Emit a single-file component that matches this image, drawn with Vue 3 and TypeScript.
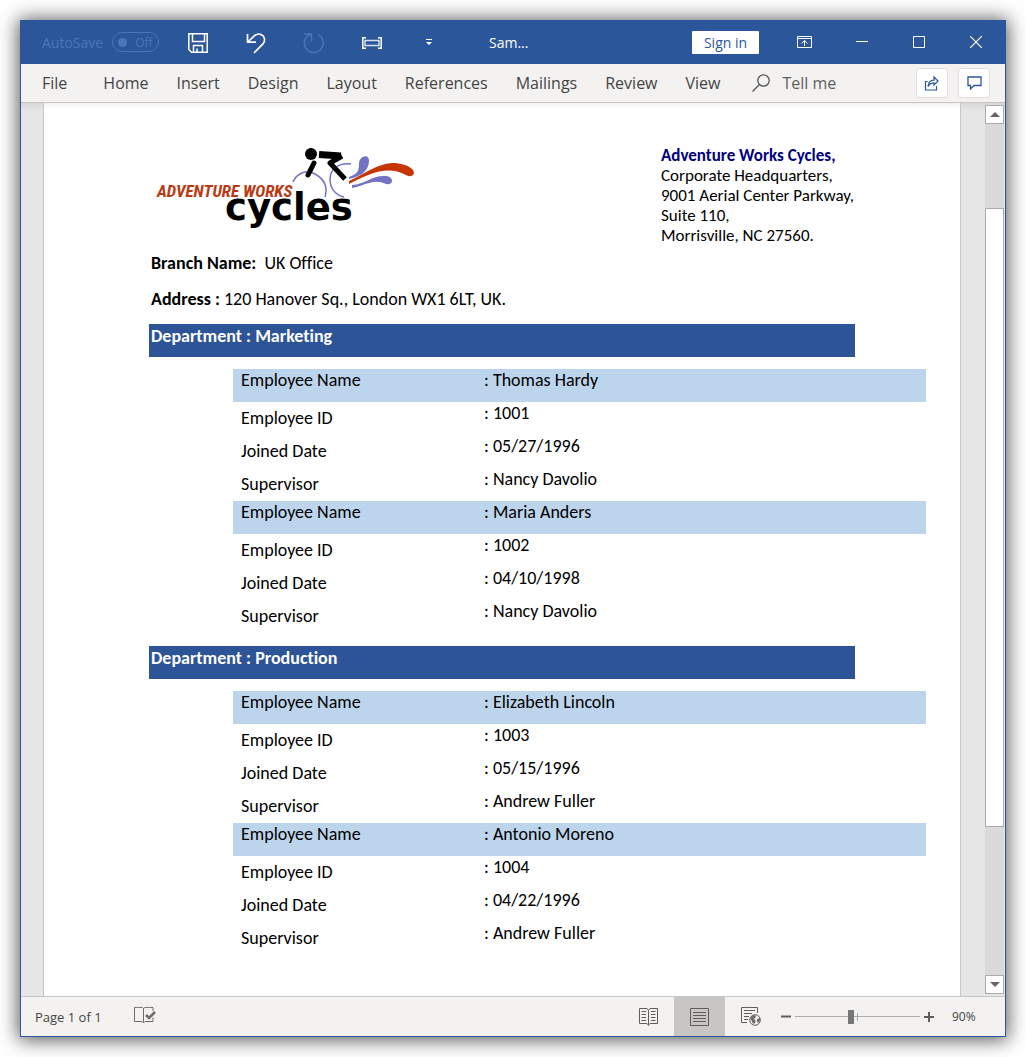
<script setup lang="ts">
import { ref } from 'vue'

interface Employee {
  name: string
  id: string
  joined: string
  supervisor: string
}

interface Department {
  name: string
  employees: Employee[]
}

const tabs: string[] = ['File', 'Home', 'Insert', 'Design', 'Layout', 'References', 'Mailings', 'Review', 'View']

const departments: Department[] = [
  {
    name: 'Marketing',
    employees: [
      { name: 'Thomas Hardy', id: '1001', joined: '05/27/1996', supervisor: 'Nancy Davolio' },
      { name: 'Maria Anders', id: '1002', joined: '04/10/1998', supervisor: 'Nancy Davolio' },
    ],
  },
  {
    name: 'Production',
    employees: [
      { name: 'Elizabeth Lincoln', id: '1003', joined: '05/15/1996', supervisor: 'Andrew Fuller' },
      { name: 'Antonio Moreno', id: '1004', joined: '04/22/1996', supervisor: 'Andrew Fuller' },
    ],
  },
]

const zoom = ref(90)
</script>

<template>
  <div class="window">
    <header class="titlebar">
      <span class="autosave">AutoSave</span>
      <button class="toggle" type="button" disabled aria-label="AutoSave off"><span class="dot"></span>Off</button>
      <nav class="quick" aria-label="Quick access">
        <button type="button" aria-label="Save">
          <svg width="20" height="20" viewBox="0 0 20 20" fill="none" stroke="#fff" stroke-width="1.5">
            <path d="M.8.8h18.4v18.4H3.5L.8 16.5zM4.5 1v7.500h12V1M5.500 19v-6.500h9V19M9 19v-3.500" />
          </svg>
        </button>
        <button type="button" aria-label="Undo">
          <svg width="20" height="21" viewBox="0 0 20 21" fill="none" stroke="#fff" stroke-width="1.700">
            <path d="M1.500 1v8.200H10M1.800 9 8.500 2.600C11 .5 14.500.5 16.800 2.600c2.400 2.300 2.300 6 .2 8.300L8 20" />
          </svg>
        </button>
        <button type="button" disabled aria-label="Redo">
          <svg width="22" height="22" viewBox="0 0 22 22" fill="none" stroke="#4a76b6" stroke-width="1.500">
            <path d="M1 2h7.500v7.500M8.300 2.200C4 3.600 1.300 7 1.300 11a9.500 9.500 0 0 0 19 0c0-3.800-2-6.800-5.300-8.400" />
          </svg>
        </button>
        <button type="button" aria-label="Fit width">
          <svg width="20" height="12" viewBox="0 0 20 12" fill="none" stroke="#fff">
            <path d="M4 .8H.8v10.400H4M16 .8h3.200v10.400H16" stroke-width="1.500" />
            <path d="M3 3.500h14v5H3z" stroke="#d5deed" stroke-width="1.500" />
          </svg>
        </button>
        <button type="button" aria-label="Customize toolbar">
          <svg width="6" height="6" viewBox="0 0 6 6" fill="#fff"><path d="M0 0h6v1H0zM0 3h6L3 6z" /></svg>
        </button>
      </nav>
      <h1 class="title">Sam...</h1>
      <button class="signin" type="button">Sign in</button>
      <div class="controls">
        <button type="button" aria-label="Ribbon display options">
          <svg width="15" height="12" viewBox="0 0 15 12" fill="none" stroke="#fff">
            <path d="M.5.500h14v11H.5zM.5 2.500h14M7.500 10V4.500M4.500 7.500l3-3 3 3" />
          </svg>
        </button>
        <button type="button" aria-label="Minimize">
          <svg width="12" height="12" viewBox="0 0 12 12"><path d="M0 5.500h12" stroke="#fff" /></svg>
        </button>
        <button type="button" aria-label="Maximize">
          <svg width="12" height="12" viewBox="0 0 12 12"><path d="M.5.500h11v11H.5z" fill="none" stroke="#fff" /></svg>
        </button>
        <button type="button" aria-label="Close">
          <svg width="12" height="12" viewBox="0 0 12 12"><path d="m0 0 12 12M12 0 0 12" stroke="#fff" stroke-width="1.200" /></svg>
        </button>
      </div>
    </header>

    <div class="ribbon">
      <nav class="tabs" aria-label="Ribbon tabs">
        <button v-for="tab in tabs" :key="tab" type="button">{{ tab }}</button>
      </nav>
      <button class="tell" type="button">
        <svg width="18" height="18" viewBox="0 0 18 18" fill="none" stroke="#555" stroke-width="1.300">
          <circle cx="11.500" cy="6.500" r="5.700" />
          <path d="m7.500 10.500-7 7" />
        </svg>
        Tell me
      </button>
      <div class="share">
        <button type="button" aria-label="Share">
          <svg width="16" height="16" viewBox="0 0 16 16" fill="none" stroke="#2b579a" stroke-width="1.200">
            <path d="M3.500 6.500H1.500v8.500h11v-4M4 11.500c.3-4 2.500-6.300 6-6.300V2L14 6l-4 4V7.800c-2.800 0-4.500 1-6 3.700z" />
          </svg>
        </button>
        <button type="button" aria-label="Comments">
          <svg width="15" height="14" viewBox="0 0 15 14" fill="none" stroke="#2b579a" stroke-width="1.300">
            <path d="M1 1h13v8.500H7L3.500 13V9.500H1z" />
          </svg>
        </button>
      </div>
    </div>

    <main class="workspace">
      <article class="page">
        <header class="letterhead">
          <svg class="logo" width="262" height="86" viewBox="0 0 262 86" role="img" aria-label="Adventure Works Cycles">
            <g fill="none" stroke="#7472c4" stroke-width="1.500">
              <path d="M140 37c4-9 14-13 22-8 9 5 13 13 10 23" />
              <path d="M198 19c-12-2-21 5-21 15 0 9 5 16 14 18" />
            </g>
            <path d="M196 32c9-3 10-7 10-13 0-9 11-11 10-2-1 9-7 14-20 17z" fill="#7472c4" />
            <path d="M199 40c14-1 20-10 34-9 9 1 7 10 0 8-12-6-20 1-34 4z" fill="#7472c4" />
            <path d="M196 36c15-7 28-17 43-18 9 0 16 2 21 7 3 5-2 8-7 5-18-10-36-2-57 9z" fill="#c73504" />
            <circle cx="158" cy="9" r="6" />
            <g fill="none" stroke="#000" stroke-width="5">
              <path d="M166 9.500 188 11" stroke-width="7" />
              <path d="M189 11 177 18 192 34" stroke-linejoin="round" />
              <path d="m161 18-6 12" stroke-linecap="round" />
            </g>
            <text class="logo-top" x="4" y="52">ADVENTURE WORKS</text>
            <text class="logo-main" x="72" y="75">cycles</text>
          </svg>
          <address>
            <strong>Adventure Works Cycles,</strong><br />
            Corporate Headquarters,<br />
            9001 Aerial Center Parkway,<br />
            Suite 110,<br />
            Morrisville, NC 27560.
          </address>
        </header>

        <p class="branch"><strong>Branch Name:</strong>&nbsp; UK Office</p>
        <p class="branch"><strong>Address :</strong> 120 Hanover Sq., London WX1 6LT, UK.</p>

        <section v-for="dept in departments" :key="dept.name" class="department">
          <h2>Department : {{ dept.name }}</h2>
          <table>
            <tbody v-for="person in dept.employees" :key="person.id">
              <tr class="lead"><th scope="row">Employee Name</th><td>: {{ person.name }}</td></tr>
              <tr><th scope="row">Employee ID</th><td>: {{ person.id }}</td></tr>
              <tr><th scope="row">Joined Date</th><td>: {{ person.joined }}</td></tr>
              <tr><th scope="row">Supervisor</th><td>: {{ person.supervisor }}</td></tr>
            </tbody>
          </table>
        </section>
      </article>

      <div class="scrollbar">
        <button type="button" aria-label="Scroll up">
          <svg width="10" height="5" viewBox="0 0 10 5"><path d="M5 0l5 5H0z" fill="#666" /></svg>
        </button>
        <div class="track"><div class="before"></div><div class="thumb"></div><div class="after"></div></div>
        <button type="button" aria-label="Scroll down">
          <svg width="10" height="5" viewBox="0 0 10 5"><path d="M0 0h10L5 5z" fill="#666" /></svg>
        </button>
      </div>
    </main>

    <footer class="status">
      <span class="pages">Page 1 of 1</span>
      <button class="proof" type="button" aria-label="Proofing">
        <svg width="22" height="18" viewBox="0 0 22 18" fill="none" stroke="#6e6c6a">
          <path d="M9.500 2.500C8.500 1 7 1.500.5 1.500v14H8l1.500 1.500 1.500-1.500h8v-4M9.500 2.500v14M9.500 2.500c1-1.500 2.500-1 9.500-1V5" />
          <path d="m12 9 3 3 6-6" stroke-width="2.600" />
        </svg>
      </button>
      <div class="views">
        <button type="button" aria-label="Read mode">
          <svg width="19" height="18" viewBox="0 0 19 18" fill="none" stroke="#605e5c">
            <path d="M9.500 2.500 8 .5H.5v15H8l1.500 2 1.500-2h7.500V.5H11zM9.500 2.500v14M2.500 3.500H7M2.500 6.500H7M2.500 9.500H7M2.500 12.500H7M12 3.500h4.500M12 6.500h4.500M12 9.500h4.500M12 12.500h4.500" />
          </svg>
        </button>
        <button class="active" type="button" aria-label="Print layout">
          <svg width="19" height="18" viewBox="0 0 19 18" fill="none" stroke="#605e5c">
            <path d="M.5.500h18v17H.5zM3 4.500h13M3 7.500h13M3 10.500h13M3 13.500h13" />
          </svg>
        </button>
        <button type="button" aria-label="Web layout">
          <svg width="20" height="19" viewBox="0 0 20 19" fill="none" stroke="#605e5c">
            <path d="M6 15.500H.5V.500h16V6M3 3.500h11M3 6.500h8M3 9.500h5M3 12.500h4" />
            <circle cx="14" cy="13" r="5.300" fill="#f3f2f1" />
            <path d="M10 10c2-2 4-2 5-1 0 2-2 2-2 3 2 1 2 3 0 5-2-1-2-2-2-3-1-1-2-2-1-4zM16 12l3-1c.5 2-.5 4-2 5-1-1-1-2-1-4z" fill="#6e6c6a" stroke="none" />
          </svg>
        </button>
      </div>
      <div class="zoom">
        <button type="button" aria-label="Zoom out">
          <svg width="10" height="10" viewBox="0 0 10 10"><path d="M0 4.500h10" stroke="#605e5c" stroke-width="2" /></svg>
        </button>
        <label class="slider">
          <input v-model.number="zoom" type="range" min="10" max="190" aria-label="Zoom level" />
        </label>
        <button type="button" aria-label="Zoom in">
          <svg width="10" height="10" viewBox="0 0 10 10"><path d="M0 5h10M5 0v10" stroke="#605e5c" stroke-width="2" /></svg>
        </button>
        <output>{{ zoom }}%</output>
      </div>
    </footer>
  </div>
</template>

<style>
body {
  margin: 0;
  background: #fff;
}
</style>

<style scoped>
.window {
  display: flex;
  flex-direction: column;
  box-sizing: border-box;
  min-height: calc(100vh - 40px);
  margin: 20px;
  border: 1px solid #2b579a;
  background: #f3f2f1;
  box-shadow: 0 1px 18px 2px rgba(0, 0, 0, 0.65);
  font-family: "Open Sans", "Noto Sans", sans-serif;
  color: #444;
}

button {
  display: flex;
  align-items: center;
  justify-content: center;
  padding: 0;
  border: 0;
  background: none;
  color: inherit;
  font: inherit;
}

svg {
  display: block;
  flex: none;
}

.titlebar {
  display: flex;
  align-items: center;
  box-sizing: border-box;
  height: 43px;
  padding: 0 1px 1px 0;
  background: #2b579a;
  color: #fff;
  font-size: 14px;
}

.autosave {
  width: 70px;
  margin-left: 21px;
  color: #4a76b6;
}

.toggle {
  box-sizing: border-box;
  gap: 8px;
  width: 47px;
  height: 20px;
  border: 1px solid #4a76b6;
  border-radius: 10px;
  color: #4a76b6;
  font-size: 12px;
}

.dot {
  width: 9px;
  height: 9px;
  border-radius: 50%;
  background: #4a76b6;
}

.quick {
  display: flex;
  margin-left: 10px;
}

.quick button {
  width: 58px;
  height: 42px;
  padding-top: 2px;
}

.quick button:last-child {
  width: 55px;
  padding-top: 0;
}

.title {
  margin: 0 auto 0 33px;
  font-size: 14px;
  font-weight: 400;
}

.signin {
  width: 67px;
  height: 23px;
  margin-right: 17px;
  border-radius: 1px;
  background: #fff;
  color: #2b579a;
}

.controls {
  display: flex;
}

.controls button {
  width: 57px;
  height: 42px;
}

.ribbon {
  display: flex;
  align-items: center;
  height: 38px;
  padding: 0 15px 0 21px;
  border-bottom: 1px solid #c8c6c4;
  font-size: 16px;
}

.tabs {
  display: flex;
  gap: 28px;
}

.tabs button:first-child {
  margin-right: 8px;
}

.tell {
  gap: 12px;
  margin-left: 32px;
  color: #605e5c;
}

.share {
  display: flex;
  gap: 10px;
  margin-left: auto;
}

.share button {
  width: 32px;
  height: 30px;
  border: 1px solid #e1dfdd;
  border-radius: 3px;
  box-sizing: border-box;
  background: #fff;
}

.workspace {
  display: flex;
  flex: 1;
  padding-left: 22px;
  background: linear-gradient(rgba(0, 0, 0, 0.06), transparent 8px), #e6e6e6;
}

.page {
  flex: 1;
  padding: 42px 34px 20px 105px;
  border: solid #c6c6c6;
  border-width: 0 1px;
  background: linear-gradient(#f1f1f1, #fff 6px);
  color: #000;
  font-family: Carlito, Lato, sans-serif;
  font-size: 18px;
  font-variant-ligatures: none;
  line-height: 20px;
}

.letterhead {
  display: flex;
  justify-content: space-between;
  margin: 0 71px 7px 4px;
}

.logo-top {
  fill: #b93a12;
  font: italic 700 17px "Liberation Sans Narrow", "Roboto Condensed", Lato, sans-serif;
}

.logo-main {
  font: 700 37px "DejaVu Sans", sans-serif;
}

address {
  flex: 0 0 194px;
  padding-top: 1px;
  font-size: 17px;
  font-style: normal;
  white-space: nowrap;
}

address strong {
  color: #000080;
}

.branch {
  margin: 0 0 16px 2px;
}

.branch + .branch {
  margin-bottom: 15px;
}

.department h2 {
  height: 33px;
  margin: 0 71px 12px 0;
  padding-left: 2px;
  box-sizing: border-box;
  background: #2c5496;
  color: #fff;
  font-size: 18px;
  line-height: 24px;
}

.department + .department {
  margin-top: 13px;
}

table {
  width: calc(100% - 84px);
  margin-left: 84px;
  border-collapse: collapse;
  table-layout: fixed;
}

tr {
  height: 33px;
}

.lead {
  background: #bdd5ec;
}

th,
td {
  padding: 1px 8px 0;
  font-weight: 400;
  text-align: left;
  vertical-align: top;
}

th {
  width: 227px;
  padding-top: 6px;
}

.lead th {
  padding-top: 1px;
}

.scrollbar {
  display: flex;
  flex-direction: column;
  width: 19px;
  margin: 2px 1px 2px 24px;
}

.scrollbar button {
  box-sizing: border-box;
  width: 19px;
  height: 19px;
  border: 1px solid #ababab;
  background: #fff;
}

.track {
  display: flex;
  flex: 1;
  flex-direction: column;
  background: #dadada;
}

.before {
  flex: 84;
}

.thumb {
  flex: 619;
  border: 1px solid #ababab;
  background: #fff;
}

.after {
  flex: 148;
}

.status {
  display: flex;
  align-items: center;
  height: 39px;
  border-top: 1px solid #c6c6c6;
  font-size: 12px;
}

.pages {
  width: 99px;
  margin-left: 14px;
  font-size: 13px;
}

.proof {
  margin-bottom: 3px;
}

.views {
  display: flex;
  margin-left: auto;
}

.views button {
  width: 51px;
  height: 39px;
}

.views .active {
  background: #c8c6c4;
}

.zoom {
  display: flex;
  align-items: center;
  margin-left: 5px;
}

.slider {
  display: flex;
  width: 125px;
  margin: 0 4px;
  background: linear-gradient(#ababab, #ababab) 62px center / 1px 8px no-repeat;
}

.slider input {
  width: 100%;
  height: 16px;
  margin: 0;
  background: linear-gradient(#ababab, #ababab) center / 100% 1px no-repeat;
  appearance: none;
}

.slider input::-webkit-slider-thumb {
  width: 6px;
  height: 14px;
  background: #777;
  appearance: none;
}

.zoom output {
  width: 53px;
  margin-left: 18px;
}
</style>
